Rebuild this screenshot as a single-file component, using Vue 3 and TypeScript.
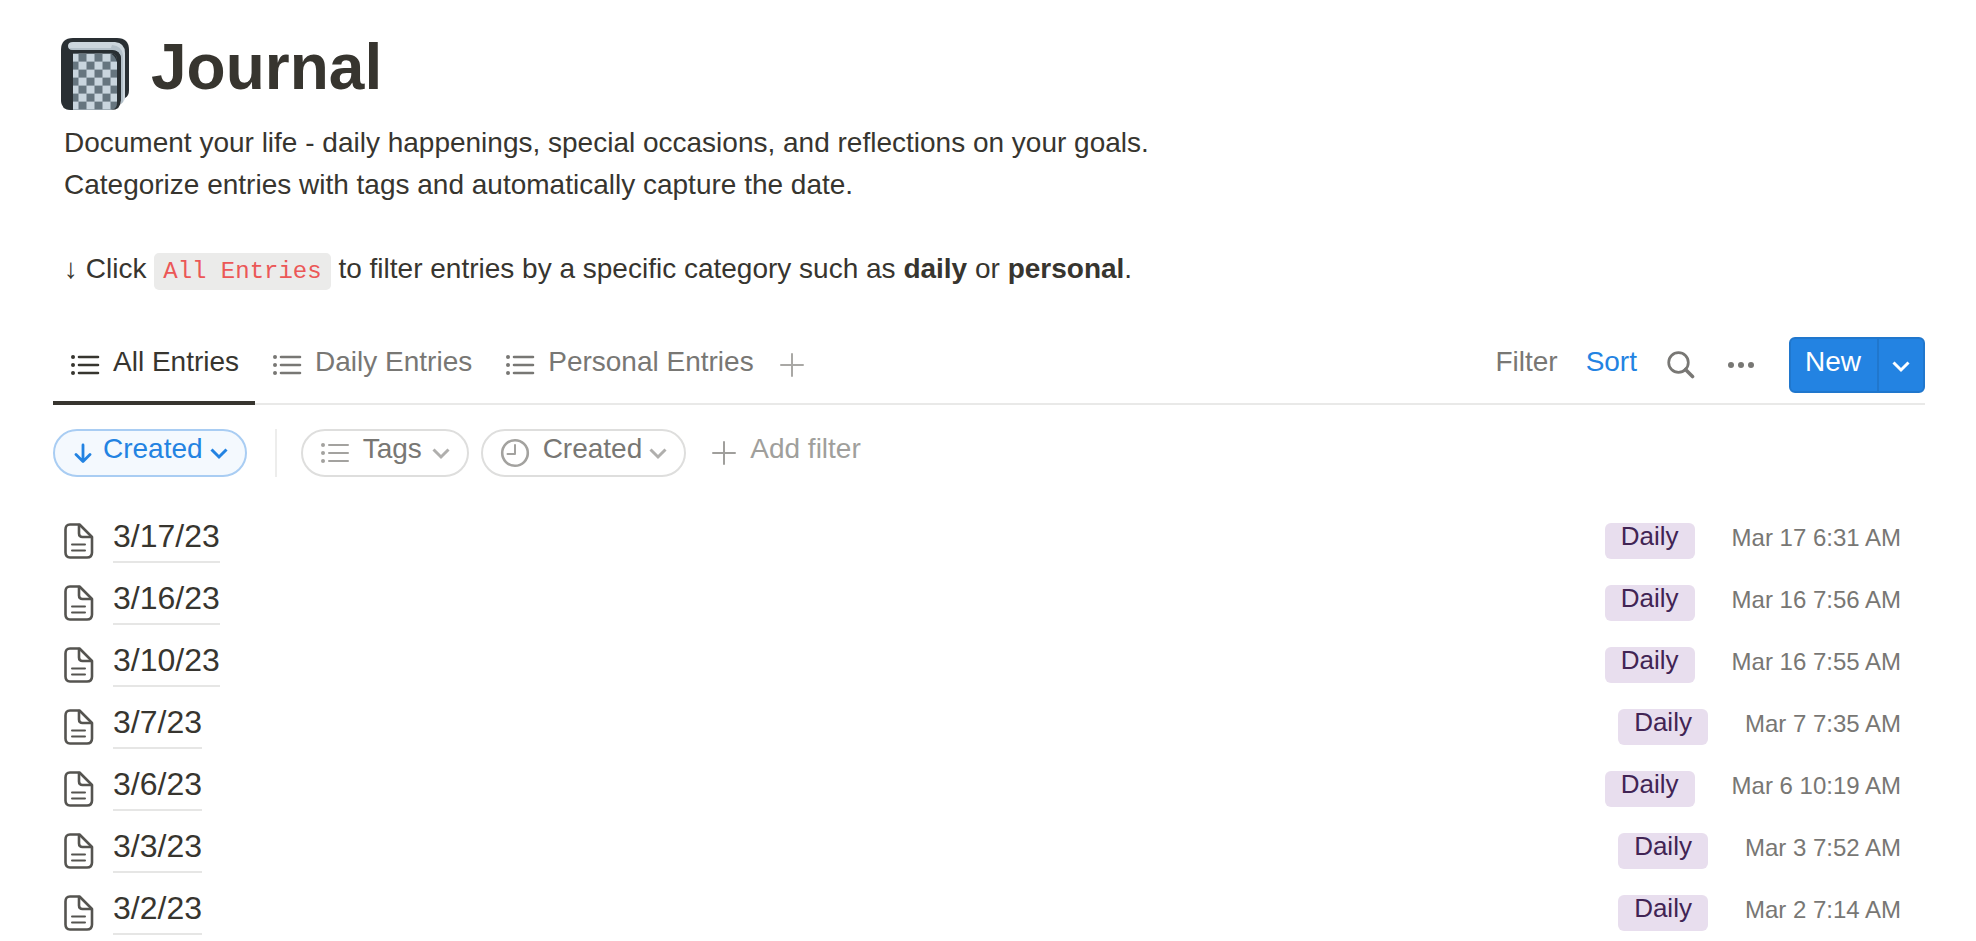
<script setup lang="ts">
import { ref } from 'vue'

interface Entry {
  title: string
  tag: string
  created: string
}

const tabs: string[] = ['All Entries', 'Daily Entries', 'Personal Entries']
const activeTab = ref<string>('All Entries')

const entries: Entry[] = [
  { title: '3/17/23', tag: 'Daily', created: 'Mar 17 6:31 AM' },
  { title: '3/16/23', tag: 'Daily', created: 'Mar 16 7:56 AM' },
  { title: '3/10/23', tag: 'Daily', created: 'Mar 16 7:55 AM' },
  { title: '3/7/23', tag: 'Daily', created: 'Mar 7 7:35 AM' },
  { title: '3/6/23', tag: 'Daily', created: 'Mar 6 10:19 AM' },
  { title: '3/3/23', tag: 'Daily', created: 'Mar 3 7:52 AM' },
  { title: '3/2/23', tag: 'Daily', created: 'Mar 2 7:14 AM' },
]
</script>

<template>
  <main class="page">
    <header class="heading">
      <svg class="book" width="68" height="72" viewBox="0 0 68 72" aria-hidden="true">
        <defs>
          <pattern id="checks" x="17.5" y="15.6" width="16" height="16" patternUnits="userSpaceOnUse">
            <rect width="16" height="16" fill="#c9d5de" />
            <rect width="8" height="8" fill="#66757f" />
            <rect x="8" y="8" width="8" height="8" fill="#66757f" />
          </pattern>
        </defs>
        <path d="M12 0H56Q68 0 68 12V52Q68 58 64 60L50 66L12 72Q0 72 0 60V12Q0 0 12 0Z" fill="#292f33" />
        <path d="M12 4H54Q64 5 64 15V59Q64 63 60 66V20Q59 12 51 12H12Q7 12 7 8Q7 4 12 4Z" fill="#ccd6dd" />
        <path d="M51 7Q61 8 62 17V64L60 66V20Q59 12 51 12H12Q9 12 8 10H50Z" fill="#99aab5" opacity="0.5" />
        <path d="M0 12H50Q60 12 60 22V62Q60 72 50 72H10Q0 72 0 62Z" fill="#292f33" />
        <path d="M12 15.600H50Q56 16 56 22V65Q56 71 50 72H12Z" fill="url(#checks)" />
        <path d="M50 15.600Q56 16 56 22V24Q54 18 50 15.600Z" fill="#292f33" />
      </svg>
      <h1>Journal</h1>
    </header>

    <p class="description">
      Document your life - daily happenings, special occasions, and reflections on your goals.<br />
      Categorize entries with tags and automatically capture the date.<br />
      <br />
      ↓ Click <code>All Entries</code> to filter entries by a specific category such as <strong>daily</strong> or
      <strong>personal</strong>.
    </p>

    <nav class="bar">
      <button
        v-for="tab in tabs"
        :key="tab"
        type="button"
        class="tab"
        :class="{ active: tab === activeTab }"
        @click="activeTab = tab"
      >
        <svg width="32" height="32" viewBox="0 0 32 32" class="stroke" stroke-width="2.600">
          <path d="M10 8H29M10 16H29M10 24H29" />
          <path d="M4 8h.01M4 16h.01M4 24h.01" stroke-width="4" />
        </svg>
        <span class="label">{{ tab }}</span>
      </button>
      <button type="button" class="add-view" aria-label="Add view">
        <svg width="24" height="24" viewBox="0 0 24 24" class="stroke" stroke-width="2">
          <path d="M12 1V23M1 12H23" />
        </svg>
      </button>

      <div class="tools">
        <button type="button" class="tool"><span class="label">Filter</span></button>
        <button type="button" class="tool blue"><span class="label">Sort</span></button>
        <button type="button" class="tool icon" aria-label="Search">
          <svg width="28" height="28" viewBox="0 0 28 28" class="stroke" stroke-width="2.700">
            <circle cx="11.500" cy="11.500" r="9.800" />
            <path d="M18.500 18.500L25.500 25.500" stroke-width="3.600" />
          </svg>
        </button>
        <button type="button" class="tool icon" aria-label="More options">
          <svg width="28" height="28" viewBox="0 0 28 28" fill="currentColor">
            <circle cx="4" cy="14" r="3" />
            <circle cx="14" cy="14" r="3" />
            <circle cx="24" cy="14" r="3" />
          </svg>
        </button>
        <div class="new">
          <button type="button" class="new-main"><span class="label">New</span></button>
          <button type="button" class="new-more" aria-label="New entry options">
            <svg class="chevron" width="16" height="16" viewBox="0 0 16 16"><path d="M0.500 4.500L8 12L15.500 4.500" /></svg>
          </button>
        </div>
      </div>
    </nav>

    <section class="filters">
      <button type="button" class="pill sorted">
        <svg width="20" height="20" viewBox="0 0 20 20" class="stroke" stroke-width="2.800">
          <path d="M10 2V18M3 11.500L10 18.500L17 11.500" />
        </svg>
        <span class="label">Created</span>
        <svg class="chevron" width="16" height="16" viewBox="0 0 16 16"><path d="M0.500 4.500L8 12L15.500 4.500" /></svg>
      </button>
      <span class="divider"></span>
      <button type="button" class="pill">
        <svg width="32" height="32" viewBox="0 0 32 32" class="stroke" stroke-width="2">
          <path d="M10 8H29M10 16H29M10 24H29" />
          <path d="M4 8h.01M4 16h.01M4 24h.01" stroke-width="4" />
        </svg>
        <span class="label">Tags</span>
        <svg class="chevron" width="16" height="16" viewBox="0 0 16 16"><path d="M0.500 4.500L8 12L15.500 4.500" /></svg>
      </button>
      <button type="button" class="pill">
        <svg width="32" height="32" viewBox="0 0 32 32" class="stroke" stroke-width="2.600">
          <circle cx="16" cy="16" r="12.800" />
          <path d="M16 8V17H8.500" stroke-width="2" />
        </svg>
        <span class="label">Created</span>
        <svg class="chevron" width="16" height="16" viewBox="0 0 16 16"><path d="M0.500 4.500L8 12L15.500 4.500" /></svg>
      </button>
      <button type="button" class="add-filter">
        <svg width="24" height="24" viewBox="0 0 24 24" class="stroke" stroke-width="2">
          <path d="M12 1V23M1 12H23" />
        </svg>
        <span class="label">Add filter</span>
      </button>
    </section>

    <ul class="entries">
      <li v-for="entry in entries" :key="entry.title">
        <svg class="doc stroke" width="32" height="36" viewBox="0 0 32 36" stroke-width="2.600">
          <path d="M7 1.500H16.500L29 14V29.500Q29 34.500 24 34.500H7Q2.500 34.500 2.500 29.500V6.500Q2.500 1.500 7 1.500Z" />
          <path d="M16 2V10.500Q16 14 19.500 14H28" />
          <path d="M9 21.500H22M9 27.500H22" stroke-width="2" />
        </svg>
        <a href="#" class="title">{{ entry.title }}</a>
        <span class="tag">{{ entry.tag }}</span>
        <time class="created">{{ entry.created }}</time>
      </li>
    </ul>
  </main>
</template>

<style>
body {
  margin: 0;
  background: #fff;
}
</style>

<style scoped>
.page {
  box-sizing: border-box;
  padding: 38px 51px 0 53px;
  color: #37352f;
  font: 28px/42px "Liberation Sans", Arial, sans-serif;
}
button {
  margin: 0;
  padding: 0;
  border: 0;
  background: none;
  color: #787774;
  font: inherit;
  white-space: nowrap;
  cursor: pointer;
  display: flex;
  align-items: center;
}
svg {
  display: block;
  flex: none;
}
.stroke {
  fill: none;
  stroke: currentColor;
  stroke-linecap: round;
  stroke-linejoin: round;
}
.chevron {
  overflow: visible;
  fill: none;
  stroke: currentColor;
  stroke-width: 3;
}
.label {
  padding-bottom: 6px;
}

.heading {
  display: flex;
  align-items: flex-start;
  gap: 22px;
  padding-left: 8px;
}
h1 {
  margin: 0;
  font-size: 64px;
  line-height: 58px;
}
.description {
  margin: 12px 0 37px;
  padding-left: 11px;
}
code {
  padding: 5px 9px;
  border-radius: 5px;
  background: #ebebea;
  color: #eb5757;
  font: 24px/24px "Liberation Mono", monospace;
}

.bar {
  display: flex;
  align-items: center;
  height: 76px;
  border-bottom: 2px solid #e9e9e8;
}
.tab {
  box-sizing: border-box;
  height: 78px;
  padding: 0 16px 2px;
  margin-bottom: -2px;
  gap: 12px;
}
.tab.active {
  color: #37352f;
  box-shadow: inset 0 -4px #37352f;
}
.add-view {
  padding: 0 10px;
  color: #a9a8a5;
}
.tools {
  display: flex;
  align-items: center;
  margin-left: auto;
}
.tool {
  padding: 0 14px;
}
.tool.icon {
  padding: 0 16px;
}
.blue {
  color: #2383e2;
}
.new {
  display: flex;
  box-sizing: border-box;
  height: 56px;
  margin-left: 18px;
  border: 2px solid #2077cd;
  border-radius: 6px;
  background: #2383e2;
}
.new button {
  color: #fff;
}
.new-main {
  padding: 0 16px 0 14px;
}
.new-more {
  padding: 2px 14px 0;
}
.new .new-more {
  border-left: 2px solid #2077cd;
}

.filters {
  display: flex;
  align-items: center;
  margin-top: 24px;
}
.filters .label {
  padding-bottom: 8px;
  line-height: 32px;
}
.pill {
  box-sizing: border-box;
  min-width: 168px;
  height: 48px;
  margin-right: 12px;
  padding: 0 18px 0 16px;
  border: 2px solid #dededd;
  border-radius: 24px;
}
.pill svg:first-child {
  margin-right: 12px;
  color: #a3a29f;
}
.pill .chevron {
  margin-left: auto;
  color: #b0afad;
}
.pill .label {
  margin-right: 8px;
}
.pill.sorted {
  margin-right: 0;
  padding: 0 18px;
  border-color: #a9cdf3;
  background: #f4f9fe;
  color: #2383e2;
}
.pill.sorted svg:first-child {
  margin-right: 10px;
  color: #2383e2;
}
.pill.sorted .chevron {
  color: #2383e2;
}
.divider {
  width: 2px;
  height: 48px;
  margin: 0 24px 0 28px;
  background: #ededec;
}
.add-filter {
  gap: 14px;
  margin-left: 14px;
  color: #a09f9c;
}

.entries {
  display: flex;
  flex-direction: column;
  gap: 18px;
  margin: 42px 0 0;
  padding: 0 24px 0 10px;
  list-style: none;
}
.entries li {
  display: flex;
  align-items: center;
}
.doc {
  margin-right: 18px;
  color: #555450;
}
.title {
  margin-right: auto;
  padding-bottom: 8px;
  border-bottom: 2px solid #e6e6e5;
  color: #37352f;
  font-size: 32px;
  line-height: 34px;
  text-decoration: none;
}
.tag {
  padding: 0 16px 10px;
  border-radius: 6px;
  background: #e8deee;
  color: #412454;
  font-size: 26px;
  line-height: 26px;
}
.created {
  margin-left: 37px;
  padding-bottom: 6px;
  color: #787774;
  font-size: 24px;
  line-height: 30px;
}
</style>
